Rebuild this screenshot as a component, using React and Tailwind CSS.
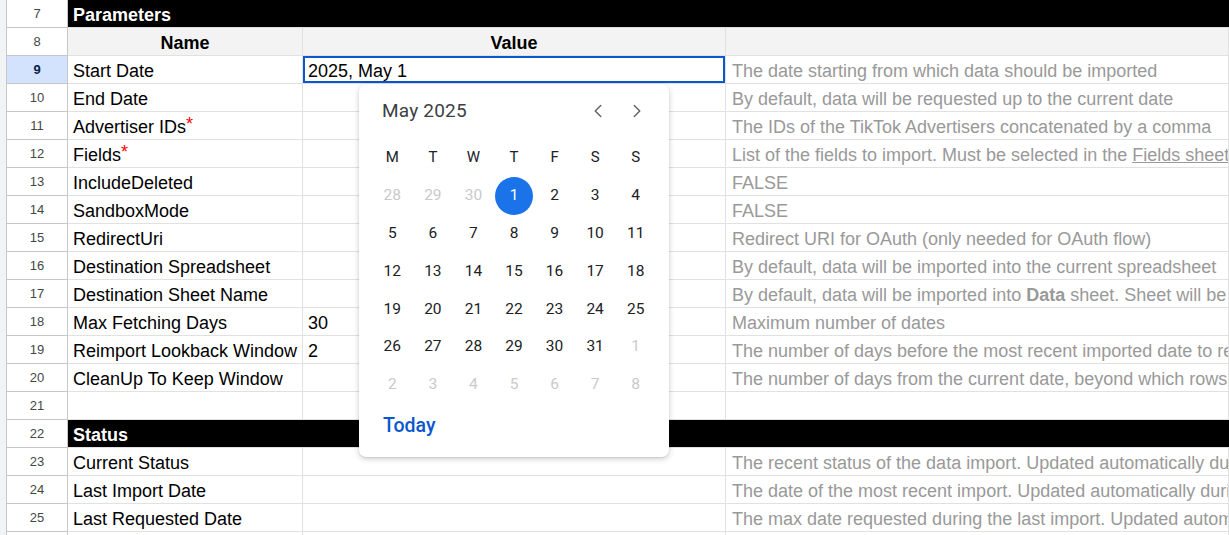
import { ChevronLeft, ChevronRight } from "lucide-react";

const ROWS = [
  { n: 7, kind: "section", label: "Parameters" },
  { n: 8, kind: "head" },
  { n: 9, name: "Start Date", value: "2025, May 1", desc: "The date starting from which data should be imported", selected: true },
  { n: 10, name: "End Date", desc: "By default, data will be requested up to the current date" },
  { n: 11, name: "Advertiser IDs", req: true, desc: "The IDs of the TikTok Advertisers concatenated by a comma" },
  {
    n: 12,
    name: "Fields",
    req: true,
    desc: (
      <>
        List of the fields to import. Must be selected in the <span className="underline">Fields sheet</span>
      </>
    ),
  },
  { n: 13, name: "IncludeDeleted", desc: "FALSE" },
  { n: 14, name: "SandboxMode", desc: "FALSE" },
  { n: 15, name: "RedirectUri", desc: "Redirect URI for OAuth (only needed for OAuth flow)" },
  { n: 16, name: "Destination Spreadsheet", desc: "By default, data will be imported into the current spreadsheet" },
  {
    n: 17,
    name: "Destination Sheet Name",
    desc: (
      <>
        By default, data will be imported into <b>Data</b> sheet. Sheet will be
      </>
    ),
  },
  { n: 18, name: "Max Fetching Days", value: "30", desc: "Maximum number of dates" },
  { n: 19, name: "Reimport Lookback Window", value: "2", desc: "The number of days before the most recent imported date to re" },
  { n: 20, name: "CleanUp To Keep Window", desc: "The number of days from the current date, beyond which rows" },
  { n: 21 },
  { n: 22, kind: "section", label: "Status" },
  { n: 23, name: "Current Status", desc: "The recent status of the data import. Updated automatically du" },
  { n: 24, name: "Last Import Date", desc: "The date of the most recent import. Updated automatically duri" },
  { n: 25, name: "Last Requested Date", desc: "The max date requested during the last import. Updated autom" },
  { n: 26 },
];

const WEEKS = [
  [28, 29, 30, 1, 2, 3, 4],
  [5, 6, 7, 8, 9, 10, 11],
  [12, 13, 14, 15, 16, 17, 18],
  [19, 20, 21, 22, 23, 24, 25],
  [26, 27, 28, 29, 30, 31, 1],
  [2, 3, 4, 5, 6, 7, 8],
];

function RowHeader({ n, selected }) {
  return (
    <div className="flex shrink-0">
      <div className="w-[7px] bg-[#f1f3f4] border-r border-[#c7c7c7]" />
      <div
        className={`w-[61px] flex items-center justify-center pt-px text-[13px] border-r border-b border-[#c7c7c7] ${
          selected ? "bg-[#d3e3fd] font-bold text-[#041e49]" : "bg-white text-[#444746]"
        }`}
      >
        {n}
      </div>
    </div>
  );
}

function Row({ row }) {
  const cell = "h-full border-r border-b border-[#e1e1e1] flex items-center pt-[4px] px-[5px] overflow-hidden whitespace-nowrap";

  if (row.kind === "section") {
    return (
      <div className="flex h-[28px]">
        <RowHeader n={row.n} />
        <div className="flex-1 bg-black text-white font-bold flex items-center pt-[3px] pl-[5px] border-b border-[#e1e1e1]">
          {row.label}
        </div>
      </div>
    );
  }

  if (row.kind === "head") {
    return (
      <div className="flex h-[28px]">
        <RowHeader n={row.n} />
        <div className={`${cell} w-[235px] shrink-0 justify-center font-bold bg-[#f3f3f3]`}>Name</div>
        <div className={`${cell} w-[423px] shrink-0 justify-center font-bold bg-[#f3f3f3]`}>Value</div>
        <div className={`${cell} flex-1 bg-[#f3f3f3]`} />
      </div>
    );
  }

  return (
    <div className="flex h-[28px]">
      <RowHeader n={row.n} selected={row.selected} />
      <div className={`${cell} w-[235px] shrink-0`}>
        {row.name}
        {row.req && <span className="text-[#ff0000] -translate-y-[3px] inline-block">*</span>}
      </div>
      <div className={`${cell} w-[423px] shrink-0 relative`}>
        {row.value}
        {row.selected && (
          <div className="absolute -left-px -top-px w-[424px] h-[29px] border border-[#a8c7fa] pointer-events-none">
            <div className="w-full h-full border-2 border-[#0b57d0]" />
          </div>
        )}
      </div>
      <div className={`${cell} flex-1 text-[#999999]`}>
        <span className="pl-px">{row.desc}</span>
      </div>
    </div>
  );
}

function DatePicker() {
  return (
    <div
      className="absolute left-[359px] top-[84px] w-[310px] h-[373px] bg-white rounded-[7px] shadow-[0_2px_6px_rgba(0,0,0,0.18),0_1px_2px_rgba(0,0,0,0.1)] px-[13px] pt-[13px]"
      style={{ fontFamily: "Roboto, 'Open Sans', sans-serif" }}
    >
      <div className="flex items-center h-[28px]">
        <div className="flex-1 pl-[10px] text-[19px] text-[#3c4043] tracking-[0.2px]">May 2025</div>
        <div className="flex items-center gap-[17px] pr-[8px] text-[#5f6368]">
          <ChevronLeft size={22} strokeWidth={1.6} />
          <ChevronRight size={22} strokeWidth={1.6} />
        </div>
      </div>
      <div className="grid grid-cols-7 mt-[21px] h-[20px] items-center text-center text-[15px] text-[#202124]">
        {["M", "T", "W", "T", "F", "S", "S"].map((d, i) => (
          <div key={i}>{d}</div>
        ))}
      </div>
      <div className="mt-[11px]">
        {WEEKS.map((week, wi) => (
          <div key={wi} className="grid grid-cols-7 h-[37.8px] items-center text-center text-[15.5px]">
            {week.map((d, di) => {
              const muted = (wi === 0 && d > 20) || (wi >= 4 && d < 10);
              const sel = wi === 0 && d === 1;
              return (
                <div key={di} className="flex items-center justify-center">
                  {sel ? (
                    <div className="w-[38px] h-[38px] rounded-full bg-[#1a73e8] text-white flex items-center justify-center">
                      {d}
                    </div>
                  ) : (
                    <span className={muted ? "text-[#c8cacc]" : "text-[#202124]"}>{d}</span>
                  )}
                </div>
              );
            })}
          </div>
        ))}
      </div>
      <div className="mt-[7px] pl-[11px] text-[19.5px] font-medium text-[#0b57d0]">Today</div>
    </div>
  );
}

export default function App() {
  return (
    <div
      className="relative w-[1229px] h-[535px] overflow-hidden bg-white text-black text-[18px]"
      style={{ fontFamily: "'Liberation Sans', Arial, sans-serif" }}
    >
      <div className="flex flex-col">
        {ROWS.map((row) => (
          <Row key={row.n} row={row} />
        ))}
      </div>
      <DatePicker />
    </div>
  );
}
